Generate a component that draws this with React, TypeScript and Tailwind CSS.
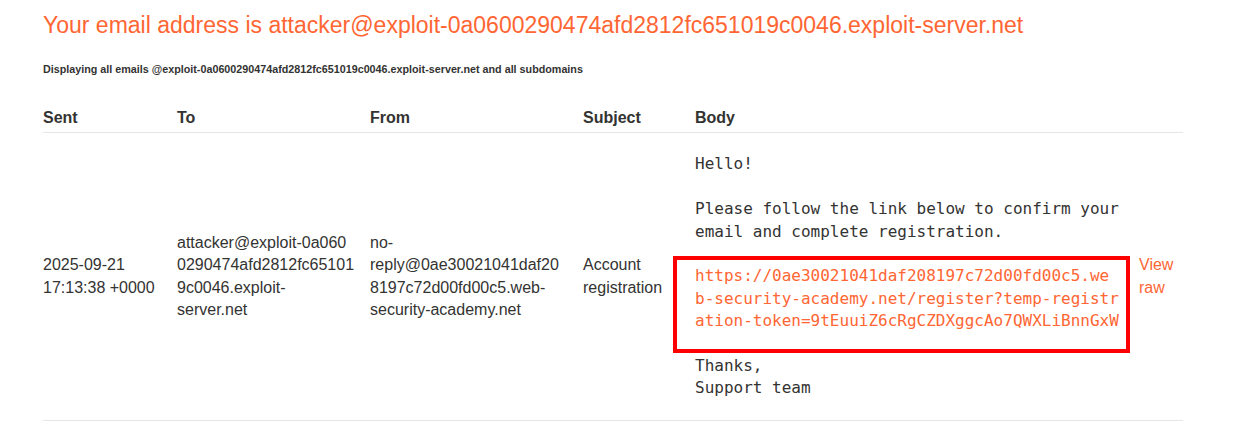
const ADDRESS = "attacker@exploit-0a0600290474afd2812fc651019c0046.exploit-server.net";

export default function App() {
  return (
    <div className="min-h-[445px] bg-white px-[43px] pt-[10px] font-['Liberation_Sans',Arial,sans-serif] text-[#333332]">
      <h1 className="text-[23px] leading-[30px] text-[#ff6633]">
        Your email address is {ADDRESS}
      </h1>
      <h4 className="mt-[22px] text-[10.75px] font-bold leading-[14px]">
        Displaying all emails @exploit-0a0600290474afd2812fc651019c0046.exploit-server.net and all subdomains
      </h4>

      <table className="mt-[31px] w-[1140px] table-fixed border-collapse text-[16px] leading-[22.4px]">
        <colgroup>
          <col className="w-[134px]" />
          <col className="w-[193px]" />
          <col className="w-[213px]" />
          <col className="w-[112px]" />
          <col className="w-[444px]" />
          <col className="w-[44px]" />
        </colgroup>
        <thead>
          <tr className="border-b border-[#e6e6e6] text-left">
            <th className="pb-[3px] font-bold">Sent</th>
            <th className="pb-[3px] font-bold">To</th>
            <th className="pb-[3px] font-bold">From</th>
            <th className="pb-[3px] font-bold">Subject</th>
            <th className="pb-[3px] font-bold">Body</th>
            <th></th>
          </tr>
        </thead>
        <tbody>
          <tr className="border-b border-[#e6e6e6] align-middle">
            <td className="pr-[10px]">2025-09-21 17:13:38 +0000</td>
            <td className="pr-[15.4px] break-all">
              attacker@exploit-0a0600290474afd2812fc651019c0046.exploit-
              <span className="whitespace-nowrap">server.net</span>
            </td>
            <td className="pr-[20px] break-words">
              no-reply@0ae30021041daf208197c72d00fd00c5.web-security-academy.net
            </td>
            <td className="pr-[10px]">Account registration</td>
            <td className="py-[20px] pr-[19px]">
              <div className="relative">
                <pre className="whitespace-pre-wrap font-['DejaVu_Sans_Mono',monospace] text-[16px] leading-[22.4px]">
                  {"Hello!\n\nPlease follow the link below to confirm your email and complete registration.\n\n"}
                  <a href="#" className="text-[#ff6633]">
                    https://0ae30021041daf208197c72d00fd00c5.we<wbr />b-security-academy.net/register?temp-registr<wbr />ation-token=9tEuuiZ6cRgCZDXggcAo7QWXLiBnnGxW
                  </a>
                  {"\n\nThanks,\nSupport team"}
                </pre>
                <div className="pointer-events-none absolute left-[-22px] top-[103px] h-[97px] w-[457px] border-4 border-[#ff0000]" />
              </div>
            </td>
            <td>
              <a href="#" className="text-[#ff6633]">
                View raw
              </a>
            </td>
          </tr>
        </tbody>
      </table>
    </div>
  );
}
